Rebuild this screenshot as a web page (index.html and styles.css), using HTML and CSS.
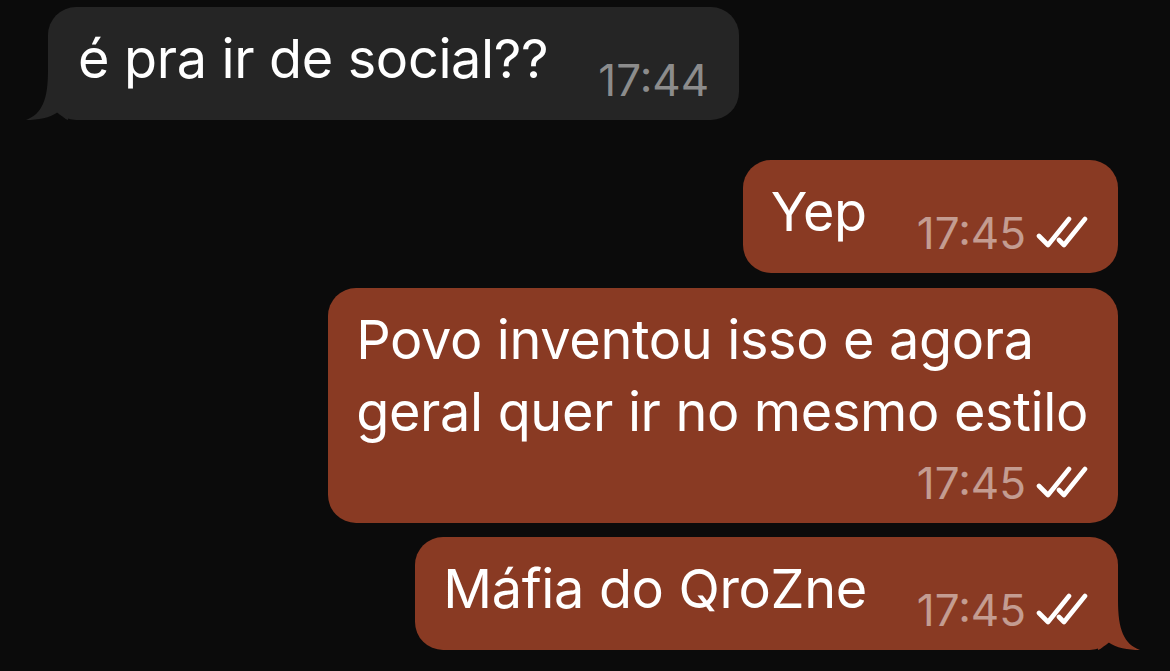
FILE: index.html
```html
<!DOCTYPE html>
<html lang="pt">
<head>
<meta charset="utf-8">
<title>Chat</title>
<link rel="stylesheet" href="styles.css">
</head>
<body>
<main class="chat">
  <div class="bubble in tail">
    <span class="text">é pra ir de social??</span>
    <span class="meta"><span class="time">17:44</span></span>
    <svg class="tail-shape" width="42" height="50" viewBox="0 0 42 50"><path d="M0 0 H20 C20 30 26 44 42 50 C30 50 18 48 10 42 C6 46 3 49 0 50 Z"/></svg>
  </div>

  <div class="bubble out first">
    <span class="text">Yep</span>
    <span class="meta"><span class="time">17:45</span><svg class="checks" width="52" height="34" viewBox="0 0 52 34"><path d="M3 21 L12 30 L33 4 M23 25 L28 30 L49 4"/></svg></span>
  </div>

  <div class="bubble out stack">
    <span class="text">Povo inventou isso e agora<br>geral quer ir no mesmo estilo</span>
    <span class="meta"><span class="time">17:45</span><svg class="checks" width="52" height="34" viewBox="0 0 52 34"><path d="M3 21 L12 30 L33 4 M23 25 L28 30 L49 4"/></svg></span>
  </div>

  <div class="bubble out tail">
    <span class="text">Máfia do QroZne</span>
    <span class="meta"><span class="time">17:45</span><svg class="checks" width="52" height="34" viewBox="0 0 52 34"><path d="M3 21 L12 30 L33 4 M23 25 L28 30 L49 4"/></svg></span>
    <svg class="tail-shape" width="42" height="50" viewBox="0 0 42 50"><path d="M0 0 H20 C20 30 26 44 42 50 C30 50 18 48 10 42 C6 46 3 49 0 50 Z"/></svg>
  </div>
</main>
</body>
</html>
```

FILE: styles.css
```css
html, body {
  margin: 0;
  padding: 0;
  background: #0b0b0b;
}

body {
  width: 1170px;
  height: 671px;
  overflow: hidden;
  font-family: Inter, "Noto Sans", "Liberation Sans", sans-serif;
  color: #ffffff;
}

.chat {
  display: flex;
  flex-direction: column;
  padding: 7px 52px 0 48px;
}

.bubble {
  position: relative;
  display: flex;
  align-items: flex-end;
  gap: 50px;
  padding: 16px 30px 13px 28px;
  border-radius: 28px;
}

.bubble.in {
  align-self: flex-start;
  background: #252525;
  padding-left: 30px;
  padding-right: 30px;
}

.bubble.out {
  align-self: flex-end;
  background: #893a23;
  margin-top: 14px;
}

.bubble.out.first {
  margin-top: 40px;
}

.bubble.stack {
  flex-direction: column;
  gap: 11px;
  margin-top: 15px;
}

.text {
  font-size: 54px;
  line-height: 72px;
  white-space: nowrap;
  margin-bottom: 12px;
  letter-spacing: -0.35px;
}

.bubble.stack .text {
  margin-bottom: 0;
}

.meta {
  display: flex;
  align-items: center;
  gap: 10px;
  height: 48px;
  margin-bottom: 3px;
  font-size: 44px;
  line-height: 48px;
  white-space: nowrap;
}

.in .time {
  color: #8c8c8c;
}

.out .time {
  color: rgba(255, 255, 255, 0.5);
}

.checks {
  display: block;
  margin-top: -2px;
}

.checks path {
  fill: none;
  stroke: #ffffff;
  stroke-width: 4.6;
  stroke-linecap: round;
  stroke-linejoin: round;
}

.tail-shape {
  position: absolute;
  bottom: 0;
  display: block;
}

.out .tail-shape {
  right: -22px;
  fill: #893a23;
}

.in .tail-shape {
  left: -22px;
  fill: #252525;
  transform: scaleX(-1);
}
```
